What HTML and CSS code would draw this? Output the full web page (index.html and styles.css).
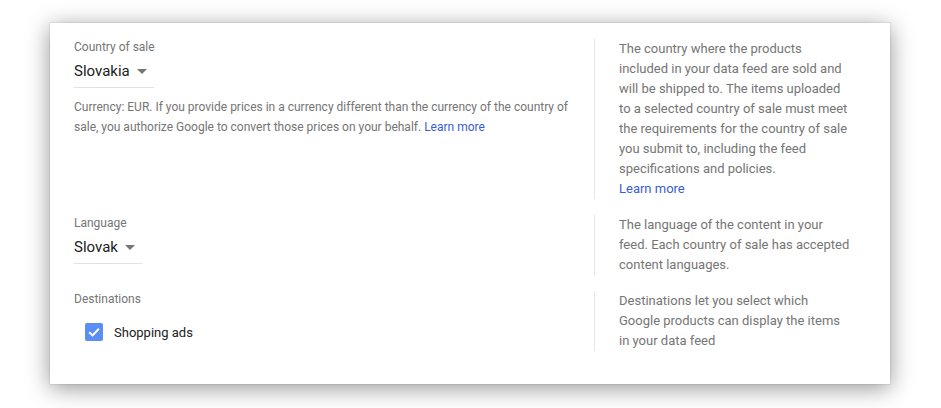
FILE: index.html
```html
<!DOCTYPE html>
<html lang="en">
<head>
<meta charset="utf-8">
<title>Feed settings</title>
<link rel="stylesheet" href="styles.css">
</head>
<body>
<div class="card">
  <div class="row">
    <div class="field">
      <div class="label">Country of sale</div>
      <div class="select select-country"><span class="value">Slovakia</span><span class="caret"></span></div>
      <p class="note">Currency: EUR. If you provide prices in a currency different than the currency of the country of sale, you authorize Google to convert those prices on your behalf. <a href="#" class="link">Learn more</a></p>
    </div>
    <div class="help">The country where the products included in your data feed are sold and will be shipped to. The items uploaded to a selected country of sale must meet the requirements for the country of sale you submit to, including the feed specifications and policies.<br><a href="#" class="link">Learn more</a></div>
  </div>
  <div class="row">
    <div class="field">
      <div class="label">Language</div>
      <div class="select select-language"><span class="value">Slovak</span><span class="caret"></span></div>
    </div>
    <div class="help">The language of the content in your feed. Each country of sale has accepted content languages.</div>
  </div>
  <div class="row">
    <div class="field">
      <div class="label">Destinations</div>
      <label class="check">
        <span class="box"><svg viewBox="0 0 18 18" width="18" height="18"><path d="M4.2 9.2 L7.6 12.4 L13.9 5.8" fill="none" stroke="#fff" stroke-width="2"/></svg></span>
        <span class="check-text">Shopping ads</span>
      </label>
    </div>
    <div class="help">Destinations let you select which Google products can display the items in your data feed</div>
  </div>
</div>
</body>
</html>
```

FILE: styles.css
```css
* { box-sizing: border-box; }
html, body { margin: 0; padding: 0; background: #fff; }
body {
  font-family: Roboto, "Noto Sans", Arial, sans-serif;
  width: 941px;
  height: 408px;
  overflow: hidden;
}
.card {
  margin: 23px 0 0 50px;
  width: 840px;
  height: 361px;
  background: #fff;
  padding: 16px 35px 0 24px;
  box-shadow: 0 0 0 1px rgba(0,0,0,0.06), 0 4px 22px rgba(0,0,0,0.42);
}
.row {
  display: flex;
  margin-bottom: 16px;
}
.field {
  width: 520px;
  padding-right: 24px;
  flex: none;
}
.help {
  border-left: 1px solid #e6e6e6;
  padding-left: 24px;
  width: 256px;
  font-size: 13px;
  line-height: 20px;
  color: #757575;
}
.label {
  font-size: 12px;
  line-height: 16px;
  color: #757575;
}
.select {
  display: inline-flex;
  align-items: center;
  padding: 4px 8px 4px 0;
  border-bottom: 1px solid #e0e0e0;
  font-size: 15px;
  line-height: 24px;
  color: #212121;
}
.select-country { width: 80px; }
.select-language { width: 68px; }
.caret {
  margin-left: 7px;
  width: 0;
  height: 0;
  border-left: 5px solid transparent;
  border-right: 5px solid transparent;
  border-top: 5px solid #757575;
}
.note {
  margin: 9px 0 0;
  font-size: 12px;
  line-height: 20px;
  color: #757575;
}
.link {
  color: #3a5bd9;
  text-decoration: none;
}
.check {
  display: flex;
  align-items: center;
  margin-top: 16px;
  padding-left: 11px;
  height: 18px;
}
.box {
  width: 18px;
  height: 18px;
  border-radius: 2px;
  background: #5a8df5;
  display: block;
}
.box svg { display: block; }
.check-text {
  margin-left: 11px;
  font-size: 13px;
  color: #212121;
}
```
